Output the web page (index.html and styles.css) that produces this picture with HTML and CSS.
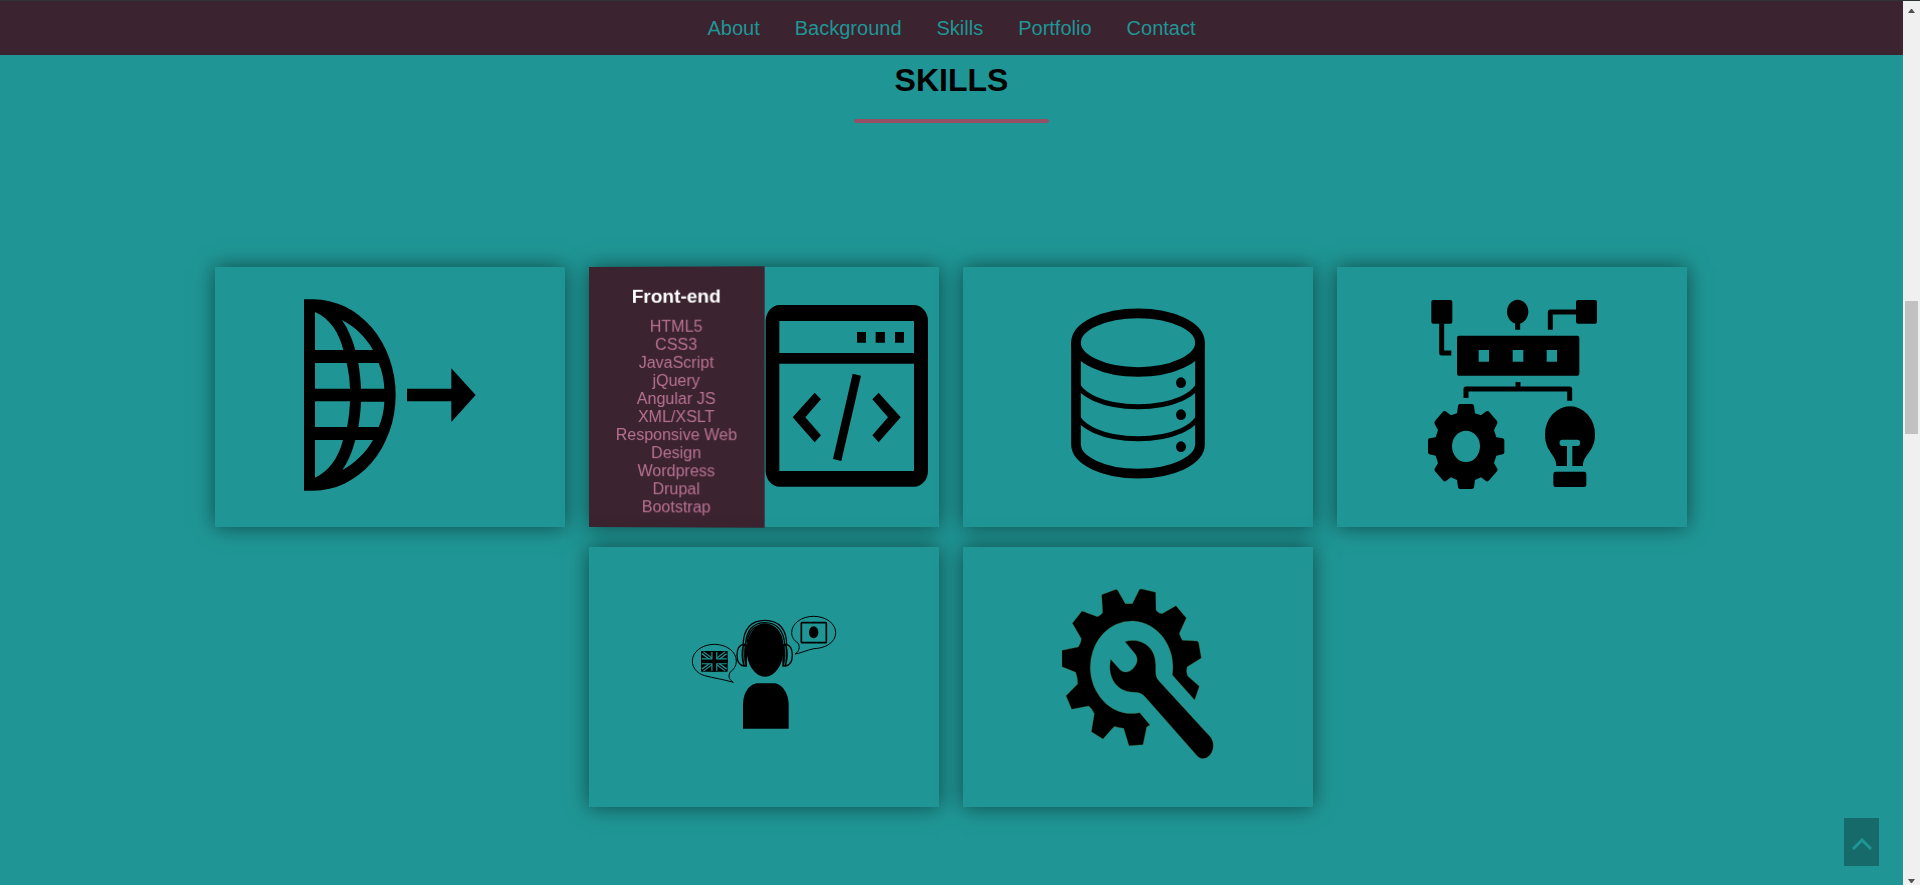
FILE: index.html
```html
<!DOCTYPE html>
<html lang="en">
<head>
<meta charset="utf-8">
<title>Skills</title>
<link rel="stylesheet" href="styles.css">
</head>
<body>
<div class="page">
  <header class="topbar">
    <nav class="nav">
      <a href="#about">About</a>
      <a href="#background">Background</a>
      <a href="#skills">Skills</a>
      <a href="#portfolio">Portfolio</a>
      <a href="#contact">Contact</a>
    </nav>
  </header>

  <main class="skills" id="skills">
    <h2 class="title">SKILLS</h2>
    <div class="cards">
      <article class="card">
        <svg class="art" viewBox="45 51 1050 780" aria-hidden="true">
          <path fill-rule="evenodd" d="M312 148H340A247 287 0 0 1 340 722H312ZM345 186C390 205 418 250 430 300H345ZM345 339H440C446 365 449 390 450 416H345ZM345 454H450C449 480 446 510 441 531H345ZM345 570H429C415 625 385 665 345 683ZM426 210C465 230 498 262 519 300H466C457 268 445 238 426 210ZM475 339H536C546 362 552 390 553 416H483C482 390 479 362 475 339ZM483 455H553C552 482 546 508 536 531H475C479 508 482 480 483 455ZM466 570H519C498 607 465 640 427 660C445 635 457 603 466 570Z"/>
          <path d="M621 416H754V355L827 435L754 516V454H621Z"/>
        </svg>
      </article>

      <article class="card">
        <svg class="art" viewBox="27 51 1050 780" aria-hidden="true">
          <path fill-rule="evenodd" d="M599 165H1002A42 48 0 0 1 1044 213V662A42 48 0 0 1 1002 710H599A42 48 0 0 1 557 662V213A42 48 0 0 1 599 165ZM598 213V309H1002V213ZM598 341V663H1002V341Z"/>
          <path d="M831 246H858V278H831ZM887 246H915V278H887ZM945 246H972V278H945ZM818 371L843 377L784 633L759 627ZM704 428L723 448L676 502L723 556L704 577L638 502ZM896 428L962 502L896 577L877 556L924 502L877 448Z"/>
        </svg>
        <div class="cover">
          <h3 class="cover-title">Front-end</h3>
          <ul class="cover-list">
            <li>HTML5</li>
            <li>CSS3</li>
            <li>JavaScript</li>
            <li>jQuery</li>
            <li>Angular JS</li>
            <li>XML/XSLT</li>
            <li>Responsive Web Design</li>
            <li>Wordpress</li>
            <li>Drupal</li>
            <li>Bootstrap</li>
          </ul>
        </div>
      </article>

      <article class="card">
        <svg class="art" viewBox="42 51 1050 780" aria-hidden="true">
          <g fill="none" stroke="#000" stroke-width="29">
            <ellipse cx="567" cy="278" rx="186" ry="88"/>
            <path d="M381 275V583A186 88 0 0 0 753 583V275"/>
            <path stroke-width="15" d="M383 388A184 82 0 0 0 751 388M383 484A184 82 0 0 0 751 484"/>
          </g>
          <ellipse cx="696" cy="398" rx="15" ry="16"/>
          <ellipse cx="696" cy="494" rx="15" ry="16"/>
          <ellipse cx="696" cy="590" rx="15" ry="16"/>
        </svg>
      </article>

      <article class="card">
        <svg class="art" viewBox="-186 -39 1050 780" aria-hidden="true">
          <rect x="97" y="60" width="63" height="71" rx="6"/>
          <ellipse cx="356" cy="95" rx="32" ry="36"/>
          <rect x="531" y="60" width="63" height="71" rx="6"/>
          <path fill="none" stroke="#000" stroke-width="15" stroke-linejoin="round" d="M128 130V219H157M356 125V149M454 149V96H535M201 354V327H512V362M357 306V327"/>
          <path fill-rule="evenodd" d="M180 167H535Q541 167 541 173V281Q541 287 535 287H180Q174 287 174 281V173Q174 167 180 167ZM239 210V245H270V210ZM341 210V245H373V210ZM443 210V245H474V210Z"/>
          <path fill-rule="evenodd" d="M183 372H219Q224 372 225 378L228 400L246 406L262 394Q267 391 271 396L294 423Q297 428 294 432L285 450L292 472L311 475Q316 476 316 481V517Q316 522 311 523L292 527L285 549L295 566Q297 570 294 574L269 602Q265 606 261 603L246 592L228 600L225 622Q224 627 219 627H183Q178 627 177 622L174 600L156 592L141 603Q137 606 133 602L108 574Q105 570 107 566L117 549L110 527L91 523Q87 522 87 517V481Q87 476 91 475L110 472L117 450L107 432Q105 428 108 423L131 396Q135 391 140 394L156 406L174 400L177 378Q178 372 183 372ZM201 452A42 47 0 0 0 201 546A42 47 0 0 0 201 452Z"/>
          <path fill-rule="evenodd" d="M472 558C472 522 438 518 438 463A75 84 0 0 1 588 463C588 518 552 522 552 558H520V498H535A8 9 0 0 0 535 479H490A8 9 0 0 0 490 498H504V558Z"/>
          <rect x="463" y="575" width="99" height="46" rx="7"/>
        </svg>
      </article>

      <article class="card">
        <svg class="art" viewBox="-243 -129 1050 780" aria-hidden="true">
          <ellipse cx="285" cy="180" rx="55" ry="80"/>
          <path d="M219 416V344C219 310 238 280 264 280H312C335 280 356 310 356 344V416Z"/>
          <g fill="none" stroke="#000" stroke-width="4">
            <path d="M219 165C221 115 245 91 285 91C327 91 350 118 350 165M226 163C230 120 250 98 285 98C322 98 342 125 344 163M231 160C235 122 255 104 285 104C316 104 335 128 338 160"/>
            <path d="M230 163H221C206 165 201 180 201 195C201 212 206 226 222 228H231M338 163H347C362 165 367 180 367 195C367 212 362 226 346 228H337"/>
          </g>
          <path d="M218 165C213 185 213 207 220 227H231V163ZM350 165C355 185 355 207 348 227H337V163Z"/>
          <path fill="none" stroke="#1f9695" stroke-width="2" d="M223 168C220 188 220 206 225 225M345 168C348 188 348 206 343 225"/>
          <g fill="none" stroke="#000" stroke-width="3">
            <path d="M104 257C80 250 67 232 67 213C67 185 97 163 133 163C170 163 199 185 199 213C199 228 190 240 180 247C172 262 182 272 190 277C160 268 130 264 104 257Z"/>
            <path d="M385 160C370 150 365 140 365 128C365 100 395 79 431 79C467 79 497 100 497 128C497 158 465 175 432 176C410 180 392 190 375 192C388 184 390 172 385 160Z"/>
            <rect x="394" y="98" width="75" height="60" rx="2" stroke-width="5"/>
          </g>
          <ellipse cx="431" cy="127" rx="14" ry="18"/>
          <rect x="93" y="183" width="80" height="62" rx="2"/>
          <g fill="none" stroke="#1f9695">
            <path stroke-width="11" d="M98 188L168 240M168 188L98 240"/>
            <path stroke="#000" stroke-width="4" d="M96 186L170 242M170 186L96 242"/>
            <path stroke-width="18" d="M133 186V242M96 214H170"/>
            <path stroke="#000" stroke-width="11" d="M133 183V245M93 214H173"/>
          </g>
        </svg>
      </article>

      <article class="card">
        <svg class="art" viewBox="-228 -69 1050 780" aria-hidden="true">
          <g stroke="#4f6a2c" stroke-width="1" stroke-linejoin="round">
            <path d="M400 315L467 390L481 349L446 318Q440 303 445 290L487 264L479 218Q478 213 472 213L430 211Q424 202 421 190L442 144L411 107L369 131Q358 130 351 121L350 67L308 57Q303 56 300 61L280 101H259L236 61Q233 57 228 59L188 74L191 128Q184 138 175 140L129 123L100 160L127 206Q126 220 118 231L69 241V290L110 307Q116 323 116 342L81 377L98 418L149 408Q160 416 166 431L157 485L192 507L222 473Q228 467 235 472L254 475L270 527L312 524L323 471L333 465L302 428A124 139 0 1 1 400 315Z"/>
            <path d="M258 215C295 202 350 222 350 285V305C350 318 353 325 362 335L515 502C540 540 500 585 474 557L318 380C308 370 300 367 285 367C236 367 203 325 215 268L243 299C255 310 272 308 283 295C297 280 298 264 287 250Z"/>
          </g>
        </svg>
      </article>
    </div>
  </main>

  <button class="to-top" type="button" aria-label="Back to top">
    <svg class="to-top-icon" viewBox="0 0 20 12" aria-hidden="true"><path d="M1 11L10 2L19 11"/></svg>
  </button>
</div>

<div class="scrollbar" aria-hidden="true">
  <svg class="arrow" viewBox="0 0 7 4"><path d="M0 4L3 0H4L7 4Z"/></svg>
  <div class="track"><div class="thumb"></div></div>
  <svg class="arrow" viewBox="0 0 7 4"><path d="M0 0H7L4 4H3Z"/></svg>
</div>
</body>
</html>
```

FILE: styles.css
```css
* {
  box-sizing: border-box;
}

body {
  margin: 0;
  display: flex;
  min-height: 100vh;
  border-top: 1px solid #2f3535;
  background: #1f9695;
  font-family: Arial, "Liberation Sans", sans-serif;
  font-size: 16px;
  line-height: 18px;
}

.page {
  flex: 1;
  min-width: 0;
}

.topbar {
  background: #3b2330;
}

.nav {
  display: flex;
  flex-wrap: wrap;
  justify-content: center;
  gap: 0 35px;
  padding: 15px 0;
  font-size: 20px;
  line-height: 24px;
}

.nav a {
  color: #1f9695;
  text-decoration: none;
}

.title {
  width: fit-content;
  margin: 0 auto;
  padding: 6px 0 0;
  font-size: 32px;
  line-height: 38px;
  text-align: center;
}

.title::after {
  content: "";
  display: block;
  width: 195px;
  height: 4px;
  margin-top: 20px;
  border-radius: 2px;
  background: #965066;
}

.cards {
  display: flex;
  flex-wrap: wrap;
  justify-content: center;
  gap: 20px 24px;
  max-width: 1480px;
  margin: 0 auto;
  padding: 144px 1px 72px 0;
}

.card {
  position: relative;
  width: 350px;
  height: 260px;
  background: #1f9695;
  box-shadow: 0 0 20px rgba(0, 0, 0, 0.5);
}

.art {
  display: block;
  width: 100%;
  height: 100%;
}

.cover {
  position: absolute;
  top: 0;
  bottom: 0;
  left: 0;
  width: 50%;
  padding: 19px 24px;
  border-right: 1px solid #3a4450;
  background: #3b2330;
  text-align: center;
  transform: perspective(1000px) rotateY(-2deg);
  transform-origin: left center;
}

.cover-title {
  margin: 0 0 10px;
  color: #fff;
  font-size: 19px;
  line-height: 22px;
}

.cover-list {
  margin: 0;
  padding: 0;
  list-style: none;
  color: #b87293;
}

.to-top {
  position: fixed;
  right: 41px;
  bottom: 19px;
  display: flex;
  align-items: center;
  justify-content: center;
  width: 35px;
  height: 48px;
  padding: 3px 0 0;
  border: 0;
  background: #176a6a;
}

.to-top-icon {
  width: 20px;
  height: 12px;
  fill: none;
  stroke: #1f9695;
  stroke-width: 3;
}

.scrollbar {
  position: sticky;
  top: 0;
  display: flex;
  flex-direction: column;
  align-items: center;
  width: 17px;
  height: calc(100vh - 1px);
  padding: 8px 0 2px;
  background: #f0f0f0;
}

.arrow {
  width: 7px;
  height: 4px;
  fill: #505050;
}

.track {
  flex: 1;
  padding-top: 288px;
}

.thumb {
  width: 13px;
  height: 133px;
  background: #c1c1c1;
}
```
